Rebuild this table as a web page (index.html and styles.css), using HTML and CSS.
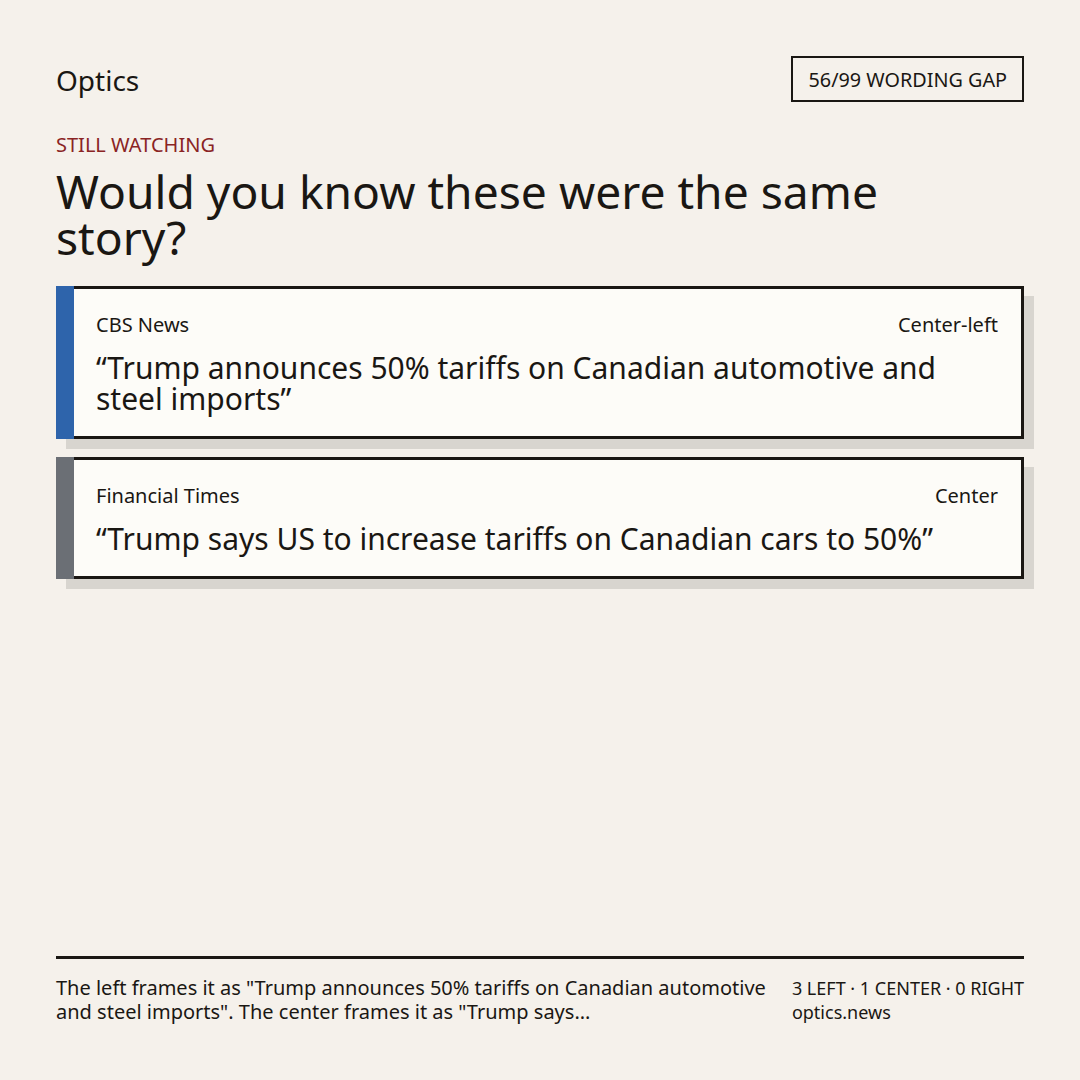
FILE: index.html
```html
<!DOCTYPE html>
<html lang="en">
<head>
<meta charset="utf-8">
<title>Optics</title>
<link rel="stylesheet" href="styles.css">
</head>
<body>
<div class="page">
  <header class="top">
    <div class="brand">Optics</div>
    <div class="badge">56/99 WORDING GAP</div>
  </header>
  <div class="kicker">STILL WATCHING</div>
  <h1 class="headline">Would you know these were the same story?</h1>
  <div class="cards">
    <div class="card">
      <div class="bar bar-blue"></div>
      <div class="card-body">
        <div class="meta"><span>CBS News</span><span>Center-left</span></div>
        <div class="quote">“Trump announces 50% tariffs on Canadian automotive and steel imports”</div>
      </div>
    </div>
    <div class="card">
      <div class="bar bar-gray"></div>
      <div class="card-body">
        <div class="meta"><span>Financial Times</span><span>Center</span></div>
        <div class="quote">“Trump says US to increase tariffs on Canadian cars to 50%”</div>
      </div>
    </div>
  </div>
  <footer class="foot">
    <p class="summary">The left frames it as "Trump announces 50% tariffs on Canadian automotive and steel imports". The center frames it as "Trump says...</p>
    <div class="stats">
      <div>3 LEFT · 1 CENTER · 0 RIGHT</div>
      <div>optics.news</div>
    </div>
  </footer>
</div>
</body>
</html>
```

FILE: styles.css
```css
* { box-sizing: border-box; }
html, body { margin: 0; padding: 0; }
body {
  background: #f5f1eb;
  color: #1a1713;
  font-family: "Noto Sans", "Open Sans", sans-serif;
}
.page {
  width: 1080px;
  height: 1080px;
  padding: 56px;
  display: flex;
  flex-direction: column;
}
.top {
  display: flex;
  justify-content: space-between;
  align-items: center;
}
.brand {
  font-size: 28px;
  line-height: 1.2;
  padding-top: 4px;
}
.badge {
  height: 46px;
  display: flex;
  align-items: center;
  padding: 0 15px 0 16px;
  border: 2px solid #1a1713;
  font-size: 19.8px;
}
.kicker {
  margin-top: 30px;
  font-size: 20px;
  line-height: 26px;
  color: #8a2424;
}
.headline {
  margin: 11px 0 0;
  max-width: 850px;
  font-weight: 400;
  font-size: 46.2px;
  line-height: 46px;
}
.cards {
  margin-top: 25px;
  display: flex;
  flex-direction: column;
  gap: 18px;
}
.card {
  display: flex;
  box-shadow: 10px 10px 0 #d8d5cf;
}
.bar { width: 18px; flex: none; }
.bar-blue { background: #2e64ab; }
.bar-gray { background: #6b6f75; }
.card-body {
  flex: 1;
  background: #fdfcf8;
  border: 3px solid #1a1713;
  border-left: 0;
  padding: 22px 23px 22px 22px;
  display: flex;
  flex-direction: column;
  gap: 14px;
}
.meta {
  display: flex;
  justify-content: space-between;
  font-size: 20px;
  line-height: 27px;
}
.quote {
  font-size: 30px;
  line-height: 31px;
}
.foot {
  margin-top: auto;
  border-top: 3px solid #1a1713;
  padding-top: 17px;
  display: flex;
  gap: 24px;
  font-size: 20px;
  line-height: 24px;
}
.summary {
  margin: 0;
  flex: 1;
}
.stats {
  flex: none;
  font-size: 18px;
}
```
